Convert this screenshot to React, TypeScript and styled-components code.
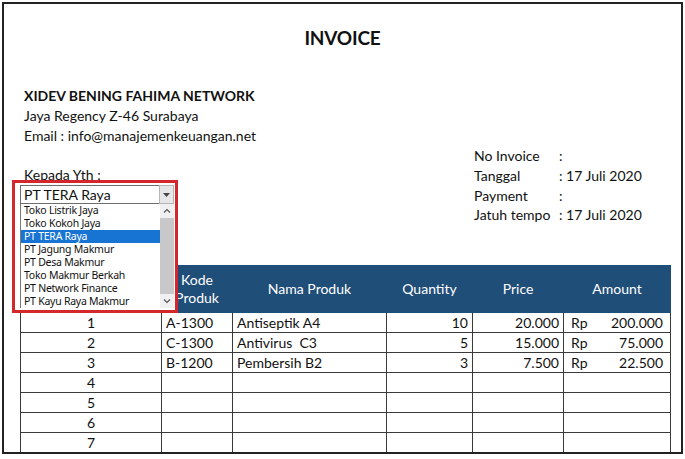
import styled, { createGlobalStyle } from "styled-components";

const GlobalStyle = createGlobalStyle`
  html, body {
    margin: 0;
    padding: 0;
    background: #fff;
  }
  body {
    font-family: Lato, "Liberation Sans", sans-serif;
    color: #111;
  }
`;

const Frame = styled.div`
  position: relative;
  margin: 2px;
  width: 677px;
  height: 448px;
  border: 2px solid #222;
  overflow: hidden;
  background: #fff;
`;

const Title = styled.h1`
  margin: 22px 0 0;
  font-size: 19px;
  line-height: 24px;
  font-weight: 700;
  text-align: center;
  letter-spacing: -0.2px;
`;

const Top = styled.div`
  display: grid;
  grid-template-columns: 470px 1fr;
  margin-top: 36px;
  font-size: 14px;
  line-height: 19.75px;
`;

const Company = styled.div`
  padding-left: 20px;
`;

const Line = styled.div<{ $bold?: boolean; $gap?: boolean }>`
  font-weight: ${(p) => (p.$bold ? 700 : 400)};
  margin-top: ${(p) => (p.$gap ? "19.75px" : "0")};
  white-space: nowrap;
`;

const Info = styled.div`
  margin-top: 60px;
  display: grid;
  grid-template-columns: 85px auto;
`;

const Table = styled.table`
  margin: 40px 0 0 16px;
  border-collapse: collapse;
  table-layout: fixed;
  width: 650px;
  font-size: 14px;
`;

const Th = styled.th`
  background: #1f4e79;
  color: #fff;
  font-weight: 400;
  height: 46px;
  padding: 0;
  line-height: 18px;
  text-align: center;
  border: 1px solid #1f4e79;
`;

const Td = styled.td<{ $align?: "left" | "center" | "right" }>`
  height: 19px;
  padding: 0 4px;
  line-height: 19px;
  border: 1px solid #3a3a3a;
  text-align: ${(p) => p.$align ?? "left"};
  white-space: pre;
`;

const Money = styled.div`
  display: flex;
  justify-content: space-between;
  padding: 0 3px;
`;

const Picker = styled.div`
  position: absolute;
  left: 8px;
  top: 176px;
  width: 166px;
  height: 133px;
  box-sizing: border-box;
  border: 3px solid #d4262d;
  background: #fff;
  padding: 2px 1px 0 5px;
  display: flex;
  flex-direction: column;
`;

const Combo = styled.div`
  display: flex;
  height: 19px;
`;

const ComboText = styled.div`
  flex: 1;
  border: 1px solid #6e6e6e;
  border-right: none;
  font-size: 14px;
  line-height: 17px;
  padding-left: 3px;
  white-space: nowrap;
`;

const ComboButton = styled.div`
  width: 15px;
  background: #e6e6e6;
  border: 1px solid #b5b5b5;
  box-sizing: border-box;
  display: flex;
  align-items: center;
  justify-content: center;
`;

const List = styled.div`
  display: flex;
  height: 104px;
  border-left: 1px solid #7a7a7a;
`;

const Items = styled.div`
  flex: 1;
  font-family: "Noto Sans", "Liberation Sans", sans-serif;
  font-size: 10.5px;
  letter-spacing: -0.25px;
`;

const Item = styled.div<{ $active?: boolean }>`
  height: 13px;
  line-height: 13px;
  padding-left: 3px;
  white-space: nowrap;
  background: ${(p) => (p.$active ? "#1874d2" : "transparent")};
  color: ${(p) => (p.$active ? "#fff" : "#111")};
`;

const Scroll = styled.div`
  width: 14px;
  background: #f0f0f0;
  display: flex;
  flex-direction: column;
  align-items: center;
`;

const Arrow = styled.div`
  height: 14px;
  display: flex;
  align-items: center;
  justify-content: center;
`;

const Thumb = styled.div`
  width: 14px;
  height: 78px;
  background: #c8c8c8;
`;

const Spacer = styled.div`
  flex: 1;
`;

const Chevron = ({ up }: { up?: boolean }) => (
  <svg width="8" height="5" viewBox="0 0 8 5">
    <path
      d={up ? "M1 4.5 L4 1.5 L7 4.5" : "M1 0.5 L4 3.5 L7 0.5"}
      fill="none"
      stroke="#555"
      strokeWidth="1.2"
    />
  </svg>
);

const customers = [
  "Toko Listrik Jaya",
  "Toko Kokoh Jaya",
  "PT TERA Raya",
  "PT Jagung Makmur",
  "PT Desa Makmur",
  "Toko Makmur Berkah",
  "PT Network Finance",
  "PT Kayu Raya Makmur",
];

type Row = {
  id: number;
  no?: number;
  kode?: string;
  nama?: string;
  qty?: string;
  price?: string;
  amount?: string;
};

const rows: Row[] = [
  { id: 1, no: 1, kode: "A-1300", nama: "Antiseptik A4", qty: "10", price: "20.000", amount: "200.000" },
  { id: 2, no: 2, kode: "C-1300", nama: "Antivirus  C3", qty: "5", price: "15.000", amount: "75.000" },
  { id: 3, no: 3, kode: "B-1200", nama: "Pembersih B2", qty: "3", price: "7.500", amount: "22.500" },
  { id: 4, no: 4 },
  { id: 5, no: 5 },
  { id: 6, no: 6 },
  { id: 7, no: 7 },
  { id: 8 },
];

const App = () => {
  return (
    <>
      <GlobalStyle />
      <Frame>
        <Title>INVOICE</Title>
        <Top>
          <Company>
            <Line $bold>XIDEV BENING FAHIMA NETWORK</Line>
            <Line>Jaya Regency Z-46 Surabaya</Line>
            <Line>Email : info@manajemenkeuangan.net</Line>
            <Line $gap>Kepada Yth :</Line>
          </Company>
          <Info>
            <span>No Invoice</span>
            <span>:</span>
            <span>Tanggal</span>
            <span>: 17 Juli 2020</span>
            <span>Payment</span>
            <span>:</span>
            <span>Jatuh tempo</span>
            <span>: 17 Juli 2020</span>
          </Info>
        </Top>
        <Table>
          <colgroup>
            <col style={{ width: 141 }} />
            <col style={{ width: 71 }} />
            <col style={{ width: 154 }} />
            <col style={{ width: 86 }} />
            <col style={{ width: 91 }} />
            <col style={{ width: 107 }} />
          </colgroup>
          <thead>
            <tr>
              <Th />
              <Th>
                Kode
                <br />
                Produk
              </Th>
              <Th>Nama Produk</Th>
              <Th>Quantity</Th>
              <Th>Price</Th>
              <Th>Amount</Th>
            </tr>
          </thead>
          <tbody>
            {rows.map((r) => (
              <tr key={r.id}>
                <Td $align="center">{r.no}</Td>
                <Td>{r.kode}</Td>
                <Td>{r.nama}</Td>
                <Td $align="right">{r.qty}</Td>
                <Td $align="right">{r.price}</Td>
                <Td>
                  {r.amount && (
                    <Money>
                      <span>Rp</span>
                      <span>{r.amount}</span>
                    </Money>
                  )}
                </Td>
              </tr>
            ))}
          </tbody>
        </Table>
        <Picker>
          <Combo>
            <ComboText>PT TERA Raya</ComboText>
            <ComboButton>
              <svg width="7" height="4" viewBox="0 0 7 4">
                <path d="M0 0 H7 L3.5 4 Z" fill="#444" />
              </svg>
            </ComboButton>
          </Combo>
          <List>
            <Items>
              {customers.map((c) => (
                <Item key={c} $active={c === "PT TERA Raya"}>
                  {c}
                </Item>
              ))}
            </Items>
            <Scroll>
              <Arrow>
                <Chevron up />
              </Arrow>
              <Thumb />
              <Spacer />
              <Arrow>
                <Chevron />
              </Arrow>
            </Scroll>
          </List>
        </Picker>
      </Frame>
    </>
  );
};

export default App;
